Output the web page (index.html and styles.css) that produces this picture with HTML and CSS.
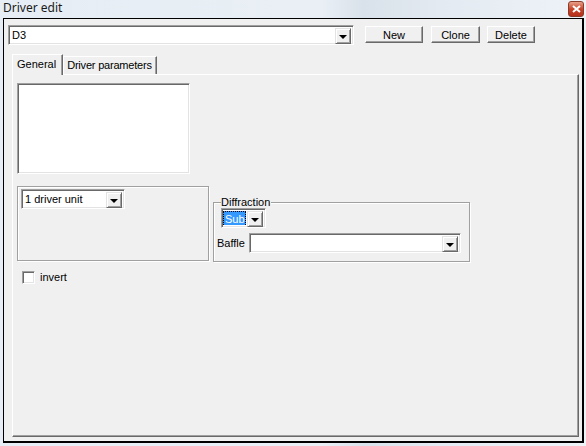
FILE: index.html
```html
<!DOCTYPE html>
<html>
<head>
<meta charset="utf-8">
<link rel="stylesheet" href="styles.css">
</head>
<body>
<div class="window">
  <div class="titlebar">
    <span class="title">Driver edit</span>
    <span class="close"><svg width="9" height="8" viewBox="0 0 9 8"><path d="M1 1 L8 7 M8 1 L1 7" stroke="#fff" stroke-width="2"/></svg></span>
  </div>
  <div class="client">
    <div class="toprow">
      <div class="combo main-combo"><span class="val">D3</span><span class="drop"><i class="arrow"></i></span></div>
      <button class="btn btn-new">New</button>
      <button class="btn btn-clone">Clone</button>
      <button class="btn btn-delete">Delete</button>
    </div>
    <div class="tabs">
      <div class="tab active">General</div>
      <div class="tab params">Driver parameters</div>
    </div>
    <div class="panel">
      <div class="listbox"></div>
      <div class="groups">
        <div class="group g1">
          <div class="combo units"><span class="val">1 driver unit</span><span class="drop"><i class="arrow"></i></span></div>
        </div>
        <div class="group g2">
          <span class="legend">Diffraction</span>
          <div class="combo sub"><span class="val"><span class="sel">Sub</span></span><span class="drop"><i class="arrow"></i></span></div>
          <div class="baffle-row">
            <span class="lbl">Baffle</span>
            <div class="combo baffle"><span class="val"></span><span class="drop"><i class="arrow"></i></span></div>
          </div>
        </div>
      </div>
      <label class="check"><span class="box"></span><span>invert</span></label>
    </div>
  </div>
</div>
</body>
</html>
```
FILE: styles.css
```css
html, body { margin: 0; padding: 0; }
body {
  width: 586px; height: 446px; overflow: hidden;
  background: #e9eff5;
  font-family: "Liberation Sans", Arial, sans-serif;
  font-size: 11px; color: #000;
}
.window {
  width: 586px; height: 446px;
  background: linear-gradient(90deg, #e6edf4 0%, #e9eff5 55%, #d9e1ea 62%, #e3eaf1 75%, #eef3f8 100%);
  display: flex; flex-direction: column;
}
.titlebar {
  height: 18px; display: flex; align-items: flex-start; justify-content: space-between;
  padding: 0 2px 0 3px; box-sizing: border-box;
}
.title {
  font-family: "Noto Sans", "Open Sans", sans-serif; font-size: 12px; line-height: 16px;
  color: #1a1a1a;
}
.close {
  width: 16px; height: 16px; margin-top: 1px; border-radius: 3px;
  background: linear-gradient(#e8a08a, #c7452a 50%, #b8301a);
  border: 1px solid #8c3a2a; box-sizing: border-box;
  display: flex; align-items: center; justify-content: center;
}
.client {
  margin-left: 3px; width: 581px; height: 425px; box-sizing: border-box;
  border: 1px solid #000; border-right-width: 2px; border-bottom-width: 2px;
  background: #f0f0f0;
  padding: 6px 0 0 4px;
}
.toprow { display: flex; align-items: flex-start; height: 20px; }
.combo {
  display: flex; box-sizing: border-box; height: 20px; background: #fff;
  border: 1px solid; border-color: #a0a0a0 #fff #fff #a0a0a0;
  box-shadow: inset 1px 1px #696969, inset -1px -1px #e3e3e3;
  padding: 2px;
}
.combo .val { flex: 1; line-height: 14px; padding-left: 1px; white-space: nowrap; overflow: hidden; }
.drop {
  width: 16px; height: 16px; box-sizing: border-box; background: #f0f0f0;
  border: 1px solid; border-color: #e3e3e3 #696969 #696969 #e3e3e3;
  box-shadow: inset 1px 1px #fff, inset -1px -1px #a0a0a0;
  display: flex; align-items: center; justify-content: center;
}
.arrow { width: 0; height: 0; border-left: 4px solid transparent; border-right: 4px solid transparent; border-top: 4px solid #000; margin-top: 1px; }
.main-combo { width: 346px; }
.btn {
  height: 17px; box-sizing: border-box; margin-top: 1px; padding: 0;
  font-family: "Liberation Sans", Arial, sans-serif; font-size: 11px; line-height: 14px;
  background: #f0f0f0; color: #000;
  border: 1px solid; border-color: #fff #696969 #696969 #fff;
  box-shadow: inset -1px -1px #a0a0a0;
}
.btn-new { width: 58px; margin-left: 11px; }
.btn-clone { width: 49px; margin-left: 8px; }
.btn-delete { width: 48px; margin-left: 7px; }
.tabs { display: flex; align-items: flex-end; margin: 9px 0 0 4px; height: 20px; position: relative; z-index: 1; }
.tab {
  box-sizing: border-box; height: 18px; line-height: 16px; padding: 0 4px 0 4px;
  border: 1px solid; border-bottom: none; border-color: #fff #696969 transparent #fff;
  box-shadow: inset -1px 0 #a0a0a0;
  background: #f0f0f0;
}
.tab.active { height: 21px; padding: 1px 6px 0 4px; margin-bottom: -1px; }
.tab.params { width: 94px; padding: 0 0 0 3px; letter-spacing: -0.2px; white-space: nowrap; }
.panel {
  margin-left: 4px; width: 567px; height: 363px; box-sizing: border-box;
  border: 1px solid; border-color: #fff #696969 #696969 #fff;
  box-shadow: inset -1px -1px #a0a0a0;
  padding: 8px 0 0 4px;
}
.listbox {
  width: 173px; height: 91px; box-sizing: border-box; background: #fff;
  border: 1px solid; border-color: #a0a0a0 #fff #fff #a0a0a0;
  box-shadow: inset 1px 1px #696969, inset -1px -1px #e3e3e3;
}
.groups { display: flex; align-items: flex-start; margin-top: 12px; }
.group {
  box-sizing: border-box; border: 1px solid #a0a0a0;
  box-shadow: inset 1px 1px #fff, 1px 1px #fff;
}
.g1 { width: 192px; height: 75px; padding: 2px 0 0 3px; }
.units { width: 104px; height: 20px; }
.g2 { width: 257px; height: 60px; margin: 16px 0 0 4px; position: relative; padding: 5px 0 0 7px; }
.legend { position: absolute; left: 7px; top: -6px; background: #f0f0f0; padding: 0 1px 0 0; line-height: 11px; }
.sub { width: 45px; height: 20px; padding: 2px 2px 2px 1px; }
.sub .val { padding: 0; display: flex; }
.sel {
  display: block; flex: 1; height: 16px; box-sizing: border-box; margin-right: 1px;
  background: #3399ff; color: #fff; line-height: 14px; padding-left: 1px;
  border: 1px dotted #e0902a; outline: 1px dotted #000; outline-offset: -1px;
}
.baffle-row { display: flex; align-items: center; margin: 5px 0 0 -4px; }
.lbl { margin-right: 4px; }
.baffle { width: 212px; }
.check { display: flex; align-items: center; margin: 8px 0 0 5px; gap: 5px; line-height: 14px; }
.box {
  width: 13px; height: 13px; box-sizing: border-box; background: #fff;
  border: 1px solid; border-color: #a0a0a0 #fff #fff #a0a0a0;
  box-shadow: inset 1px 1px #696969, inset -1px -1px #e3e3e3;
}
```
